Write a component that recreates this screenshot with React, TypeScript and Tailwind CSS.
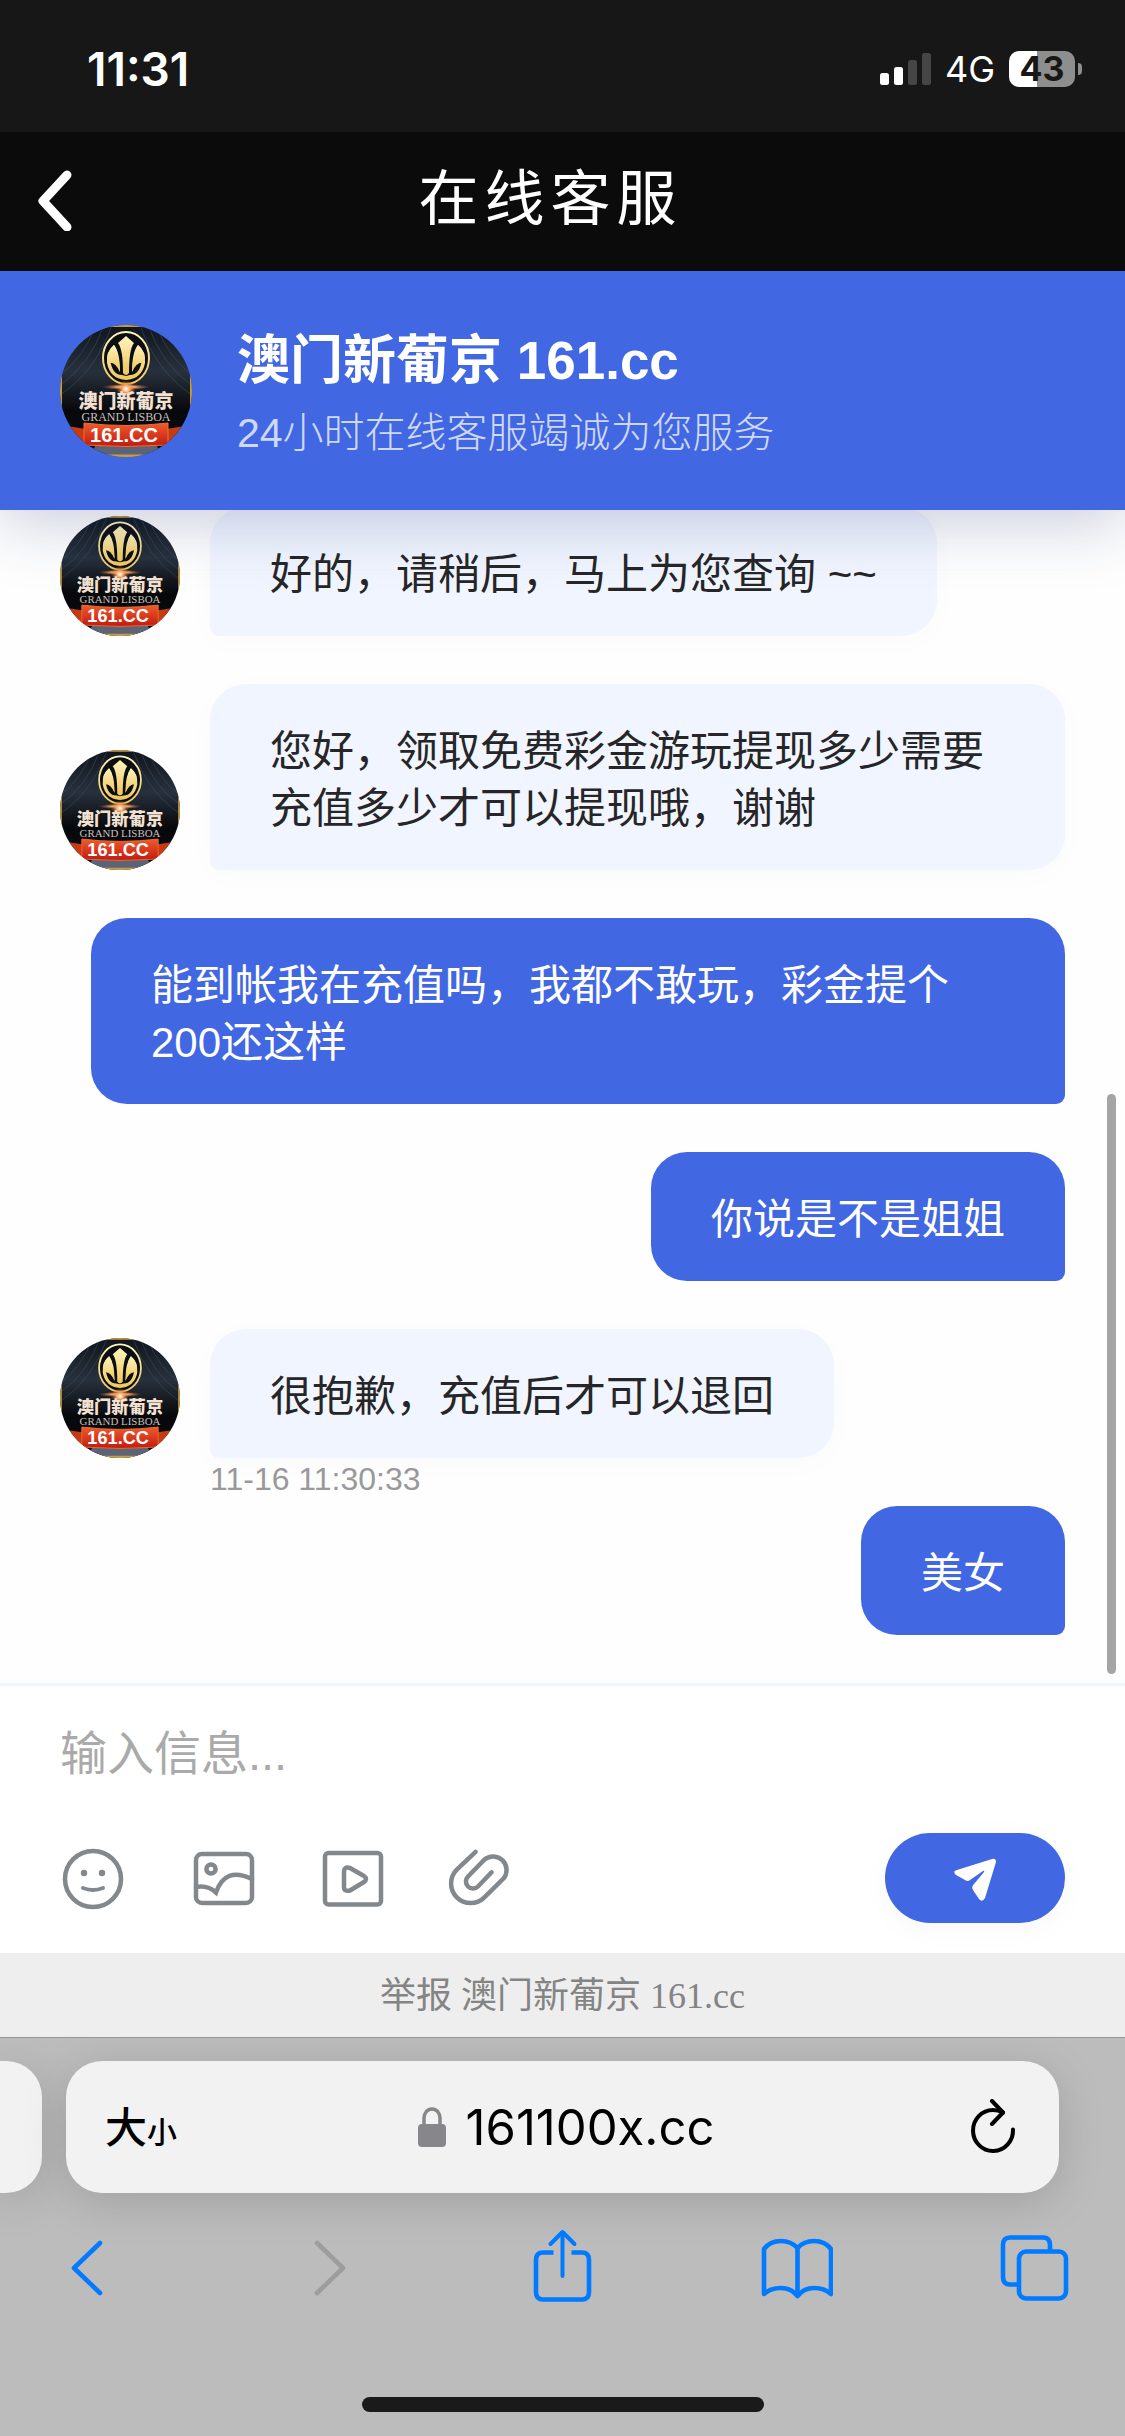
import { useId } from "react";

const CJK = "font-['Liberation_Sans','Noto_Sans_CJK_SC',sans-serif]";

type Message = { from: "agent" | "user"; text: string; time?: string };

const messages: Message[] = [
  { from: "agent", text: "好的，请稍后，马上为您查询 ~~" },
  {
    from: "agent",
    text: "您好，领取免费彩金游玩提现多少需要充值多少才可以提现哦，谢谢",
  },
  { from: "user", text: "能到帐我在充值吗，我都不敢玩，彩金提个200还这样" },
  { from: "user", text: "你说是不是姐姐" },
  { from: "agent", text: "很抱歉，充值后才可以退回", time: "11-16 11:30:33" },
  { from: "user", text: "美女" },
];

function Avatar({ className }: { className: string }) {
  const id = useId();
  return (
    <svg viewBox="0 0 132 132" className={`shrink-0 ${className}`}>
      <defs>
        <clipPath id={`${id}c`}>
          <circle cx="66" cy="66" r="66" />
        </clipPath>
        <linearGradient id={`${id}g`} x1="0" y1="0" x2="0" y2="1">
          <stop offset="0" stopColor="#fff3bd" />
          <stop offset="1" stopColor="#eec65a" />
        </linearGradient>
        <linearGradient id={`${id}b`} x1="0" y1="0" x2="0" y2="1">
          <stop offset="0" stopColor="#10151c" />
          <stop offset="0.35" stopColor="#27313d" />
          <stop offset="0.65" stopColor="#07080b" />
          <stop offset="1" stopColor="#0a0b10" />
        </linearGradient>
        <radialGradient id={`${id}f`}>
          <stop offset="0" stopColor="#fff" />
          <stop offset="0.35" stopColor="#ffb070" />
          <stop offset="1" stopColor="#b0501c" stopOpacity="0" />
        </radialGradient>
        <linearGradient id={`${id}r`} x1="0" y1="0" x2="0" y2="1">
          <stop offset="0" stopColor="#f05a2c" />
          <stop offset="1" stopColor="#c11a10" />
        </linearGradient>
      </defs>
      <g clipPath={`url(#${id}c)`}>
        <rect width="132" height="132" fill={`url(#${id}b)`} />
        <g stroke="#4b5a6b" strokeWidth="1" opacity="0.45" fill="none">
          <path d="M0 60 Q30 40 44 0M0 70 Q36 46 52 0M0 50 Q24 32 36 0M0 40 Q18 26 28 0M132 60 Q102 40 88 0M132 70 Q96 46 80 0M132 50 Q108 32 96 0M132 40 Q114 26 104 0" />
        </g>
        <path d="M0 0H132V132H0Z" fill="none" stroke="#c79c45" strokeWidth="4" />
        <ellipse cx="66" cy="33" rx="23" ry="26" fill="#0b0e12" stroke={`url(#${id}g)`} strokeWidth="2" />
        <g fill={`url(#${id}g)`}>
          <path d="M66 11 L74 18 Q69 24 69 48 Q66 52 63 48 Q63 24 58 18Z" />
          <path d="M54 20 Q46 26 47 38 Q50 54 66 55 Q82 54 85 38 Q86 26 78 20 Q73 27 72 47 Q76 36 82 34 Q80 50 70 50 L66 51 L62 50 Q52 50 50 34 Q56 36 60 47 Q59 27 54 20Z" />
          <path d="M54 20 Q45 28 48 38 Q55 36 60 47 Q60 27 54 20ZM78 20 Q87 28 84 38 Q77 36 72 47 Q72 27 78 20Z" />
        </g>
        <ellipse cx="66" cy="62" rx="24" ry="3" fill={`url(#${id}f)`} />
        <ellipse cx="66" cy="64" rx="10" ry="9" fill={`url(#${id}f)`} />
        <text x="66" y="83" textAnchor="middle" fontSize="19" fontWeight="900" fill="#f3e2d2" fontFamily="Noto Sans CJK SC, sans-serif">
          澳门新葡京
        </text>
        <text x="66" y="96" textAnchor="middle" fontSize="12" fill="#c9c0bb" fontFamily="Liberation Serif, serif">
          GRAND LISBOA
        </text>
        <path d="M0 100 L26 104 V122 L0 116ZM132 100 L106 104 V122 L132 116Z" fill="#c63a14" />
        <path d="M36 120H96L104 132H28Z" fill="#5d6376" />
        <path d="M24 98 Q66 103 108 98 V120 Q66 123 24 120Z" fill={`url(#${id}r)`} stroke="#e8722f" strokeWidth="1" />
        <text x="64" y="117" textAnchor="middle" fontSize="20" fontWeight="700" fill="#fff" fontFamily="Liberation Sans, sans-serif">
          161.CC
        </text>
        <path d="M40 131H92" stroke="#c79c45" strokeWidth="3" />
      </g>
    </svg>
  );
}

function StatusBar() {
  return (
    <div className="relative z-20 flex h-[132px] items-center justify-between bg-[#171717] pr-[43px] pl-[87px] pt-1.5 font-['Inter',sans-serif] text-white">
      <div className="text-[46px] leading-none font-semibold">11:31</div>
      <div className="flex items-center gap-3.5">
        <svg viewBox="0 0 51 32" className="h-8 w-[51px]">
          <rect x="0" y="20" width="9" height="12" rx="2.5" fill="#fff" />
          <rect x="14" y="14" width="9" height="18" rx="2.5" fill="#fff" />
          <rect x="28" y="7" width="9" height="25" rx="2.5" fill="#464646" />
          <rect x="42" y="0" width="9" height="32" rx="2.5" fill="#464646" />
        </svg>
        <div className="text-[36px] leading-none">4G</div>
        <div className="flex items-center gap-[3px]">
          <div className="flex h-9 w-[66px] items-center justify-center rounded-[10px] bg-linear-to-r from-white from-42% to-[#8e8e8e] to-42% text-[34px] leading-none font-bold text-[#171717]">
            43
          </div>
          <div className="h-3 w-1 rounded-r-full bg-[#8e8e8e]" />
        </div>
      </div>
    </div>
  );
}

function NavBar() {
  return (
    <div className="relative z-20 grid h-[139px] grid-cols-[96px_1fr_120px] items-center bg-[#0b0b0b] pb-1 text-white">
      <button aria-label="返回" className="flex h-full items-center pl-[34px]">
        <svg viewBox="0 0 40 62" className="h-[62px] w-10" fill="none" stroke="#fff" strokeWidth="9" strokeLinecap="round" strokeLinejoin="round">
          <path d="M33 6 L9 32 L33 58" />
        </svg>
      </button>
      <h1 className="text-center text-[60px] leading-none tracking-widest">在线客服</h1>
    </div>
  );
}

function ChatHeader() {
  return (
    <header className="relative z-10 flex h-[239px] items-center gap-[45px] bg-[#4267e2] px-[60px] text-white shadow-[0_12px_60px_rgba(40,60,120,0.25)]">
      <Avatar className="size-[132px]" />
      <div className="pt-3">
        <h2 className="text-[53px] leading-[72px] font-bold">澳门新葡京 161.cc</h2>
        <p className="text-[41px] leading-[72px] font-light text-white/75">24小时在线客服竭诚为您服务</p>
      </div>
    </header>
  );
}

function Bubble({ message }: { message: Message }) {
  if (message.from === "user") {
    return (
      <li className="mb-12 flex justify-end pl-[31px]">
        <div className="rounded-[36px] rounded-br-[9px] bg-[#4267e2] px-[60px] pt-[39px] pb-[33px] text-[42px] leading-[57px] text-white">
          {message.text}
        </div>
      </li>
    );
  }
  return (
    <li className={message.time ? "" : "mb-12"}>
      <div className="flex items-end gap-[30px]">
        <Avatar className="size-[120px]" />
        <div className="rounded-[36px] rounded-bl-[9px] bg-[#f1f5ff] px-[60px] pt-[39px] pb-[33px] text-[42px] leading-[57px] text-[#262626] shadow-[0_6px_30px_rgba(0,0,0,0.02)]">
          {message.text}
        </div>
      </div>
      {message.time && (
        <time className="block pb-1.5 pl-[150px] text-[32px] leading-[42px] text-[#999]">{message.time}</time>
      )}
    </li>
  );
}

function Composer() {
  const tool = "size-[66px]";
  const stroke = {
    fill: "none",
    stroke: "#82888c",
    strokeWidth: 4.5,
    strokeLinecap: "round" as const,
    strokeLinejoin: "round" as const,
  };
  return (
    <form className="border-t-3 border-[#f1f5ff] bg-white px-[60px] pb-[30px]" onSubmit={(e) => e.preventDefault()}>
      <input
        type="text"
        aria-label="输入信息"
        placeholder="输入信息..."
        className="block h-[135px] w-full text-[47px] outline-none placeholder:text-[#aaa]"
      />
      <div className="mt-3 flex h-[90px] items-center justify-between">
        <div className="flex gap-[63px]">
          <button type="button" aria-label="表情">
            <svg viewBox="0 0 66 66" className={tool} {...stroke}>
              <circle cx="33" cy="34" r="28" />
              <circle cx="24" cy="28" r="3.2" fill="#82888c" stroke="none" />
              <circle cx="42" cy="28" r="3.2" fill="#82888c" stroke="none" />
              <path d="M23 43 Q33 47 43 43" strokeWidth="4" />
            </svg>
          </button>
          <button type="button" aria-label="图片">
            <svg viewBox="0 0 66 66" className={tool} {...stroke}>
              <rect x="7" y="9" width="56" height="49" rx="6" />
              <circle cx="22" cy="24" r="4.6" />
              <path d="M7 42 Q19 40 27 47.500 Q36 21 63 34" strokeLinejoin="miter" />
            </svg>
          </button>
          <button type="button" aria-label="视频">
            <svg viewBox="0 0 66 66" className={tool} {...stroke}>
              <rect x="7" y="8" width="56" height="51.500" rx="3.500" />
              <path d="M26 27 Q26 21 32 23 L46 31 Q50 34 46 37 L32 45.500 Q26 47 26 42Z" />
            </svg>
          </button>
          <button type="button" aria-label="附件">
            <svg viewBox="0 0 66 66" className={tool} {...stroke}>
              <path d="M28.600 6.800 L9.800 24.700 A19.500 19.500 0 0 0 37.400 52.300 L56.500 33.500 A13.500 13.500 0 0 0 37.500 14.500 L21 31.500 A7 7 0 0 0 31 41.500 L44.600 27.300" />
            </svg>
          </button>
        </div>
        <button aria-label="发送" className="flex h-[90px] w-[180px] items-center justify-center rounded-full bg-[#4267e2] shadow-[0_6px_30px_rgba(0,0,0,0.03)]">
          <svg viewBox="0 0 42 42" className="size-[42px] overflow-visible" fill="#fff">
            <path d="M38 2 Q42 1 42 5 L31 41 Q28 46 25 42 L19 33 Q17 30 20 27 L30 15 Q31 13 29 14 L16 23 Q14 25 11 23 L2 18 Q-2 14 3 13Z" />
          </svg>
        </button>
      </div>
    </form>
  );
}

function BrowserBar() {
  const icon = {
    viewBox: "0 0 72 78",
    className: "h-[78px] w-[72px]",
    fill: "none",
    stroke: "currentColor",
    strokeWidth: 4.6,
    strokeLinecap: "round" as const,
    strokeLinejoin: "round" as const,
  };
  return (
    <div className="flex-1 overflow-hidden border-t border-[#979797] bg-[#bcbcbc] pt-[23px]">
      <div className="flex h-[132px] gap-6 pr-[66px]">
        <div className="w-[42px] rounded-r-[36px] bg-[#f2f2f2] shadow-[0_9px_45px_rgba(0,0,0,0.15)]" />
        <div className="grid flex-1 grid-cols-[1fr_auto_1fr] items-center rounded-[36px] bg-[#f2f2f2] pr-8 pl-[39px] text-black shadow-[0_9px_45px_rgba(0,0,0,0.15)]">
          <button aria-label="页面设置" className="flex items-baseline justify-self-start pt-1 leading-none font-medium">
            <span className="text-[42px]">大</span>
            <span className="text-[30px]">小</span>
          </button>
          <div className="flex items-center gap-5 font-['Inter',sans-serif] text-[49px] leading-none">
            <svg viewBox="0 0 28 40" className="h-10 w-7">
              <rect x="0" y="17" width="28" height="23" rx="4" fill="#86868b" />
              <path d="M6 18 V11 A8 9 0 0 1 22 11 V18" fill="none" stroke="#86868b" strokeWidth="3.5" />
            </svg>
            161100x.cc
          </div>
          <button aria-label="重新载入" className="justify-self-end">
            <svg viewBox="0 0 58 56" className="h-14 w-[58px]" fill="none" stroke="#000" strokeWidth="4" strokeLinecap="round" strokeLinejoin="round">
              <path d="M34 13.500 Q29 11 24 11 A20 20.500 0 1 0 44 30.500" />
              <path d="M23 2 L34 13.500 L23 25" />
            </svg>
          </button>
        </div>
      </div>
      <nav className="mt-[34px] flex h-[78px] items-center justify-between pr-[55px] pl-[51px] text-[#007aff]">
        <button aria-label="后退">
          <svg {...icon}>
            <path d="M49 16 L23 41 L49 66" />
          </svg>
        </button>
        <button aria-label="前进" disabled className="text-[#9d9d9d]">
          <svg {...icon}>
            <path d="M29 16 L55 41 L29 66" />
          </svg>
        </button>
        <button aria-label="分享">
          <svg {...icon}>
            <path d="M28.500 25.500 H18 Q11 25.500 11 33 V65 Q11 72.500 18 72.500 H57 Q64 72.500 64 65 V33 Q64 25.500 57 25.500 H46.500" strokeLinecap="butt" />
            <path d="M37.500 49 V6 M25.500 17 L37.500 5 L49.500 17" strokeWidth="4" />
          </svg>
        </button>
        <button aria-label="书签">
          <svg {...icon}>
            <path d="M36.500 21 Q30 14 20 14 Q9 14 3 22 V67 Q10 61 20 61 Q30 61 36.500 69 Q43 61 53 61 Q63 61 70 67 V22 Q64 14 53 14 Q43 14 36.500 21 V69" />
          </svg>
        </button>
        <button aria-label="标签页">
          <svg {...icon}>
            <rect x="21" y="24.500" width="47" height="47" rx="7" />
            <path d="M20 57.500 H12 Q5 57.500 5 50 V18 Q5 10.500 12 10.500 H45 Q52 10.500 52 18 V24" strokeLinecap="butt" />
          </svg>
        </button>
      </nav>
      <div className="mx-auto mt-[92px] mb-6 h-[15px] w-[402px] rounded-full bg-[#1a1a1a]" />
    </div>
  );
}

export default function App() {
  return (
    <div className={`flex min-h-screen flex-col overflow-hidden bg-[#fefefe] ${CJK}`}>
      <StatusBar />
      <NavBar />
      <ChatHeader />
      <main className="relative">
        <ul className="-mt-[3px] px-[60px]">
          {messages.map((m) => (
            <Bubble key={m.text} message={m} />
          ))}
        </ul>
        <div className="absolute right-[9px] bottom-[9px] h-[580px] w-[9px] rounded-full bg-[#a5a5a5]" />
      </main>
      <Composer />
      <footer className="h-[84px] bg-[#eee] text-center font-['Liberation_Serif','Noto_Sans_CJK_SC',serif] text-[36px] leading-[86px] text-[#848484]">
        举报 澳门新葡京 161.cc
      </footer>
      <BrowserBar />
    </div>
  );
}
